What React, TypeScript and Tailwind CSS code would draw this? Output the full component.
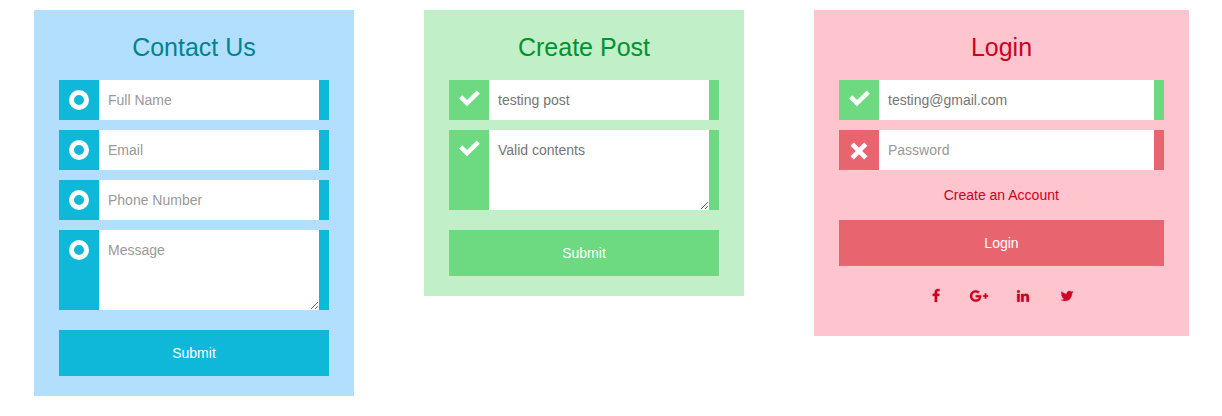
import type { ReactNode } from "react";

type Status = "idle" | "valid" | "invalid";

const box: Record<Status, string> = {
  idle: "bg-[#0fb8d8]",
  valid: "bg-[#6dd980]",
  invalid: "bg-[#e8656f]",
};

function StatusIcon({ status }: { status: Status }) {
  return (
    <svg viewBox="0 0 40 40" className="block size-10 shrink-0" fill="none" stroke="#fff">
      {status === "idle" && <circle cx="20" cy="20" r="7.5" strokeWidth="5" />}
      {status === "valid" && <path d="M11.7 16.8L18 23.1L29.3 12.2" strokeWidth="4.5" />}
      {status === "invalid" && <path d="M13.2 14.2L26.8 27.8M26.8 14.2L13.2 27.8" strokeWidth="4.6" />}
    </svg>
  );
}

interface FieldProps {
  status: Status;
  placeholder?: string;
  value?: string;
  multiline?: boolean;
}

function Field({ status, placeholder, value, multiline }: FieldProps) {
  const input =
    "block min-w-0 flex-1 rounded-none border-0 bg-white px-[9px] text-sm text-[#757575] outline-none placeholder:text-[#999]";
  return (
    <div className={`mb-2.5 flex pr-2.5 ${box[status]}`}>
      <StatusIcon status={status} />
      {multiline ? (
        <textarea className={`${input} h-20 resize py-2.5`} placeholder={placeholder} defaultValue={value} />
      ) : (
        <input className={`${input} h-10`} placeholder={placeholder} defaultValue={value} />
      )}
    </div>
  );
}

function Card({ title, className, children }: { title: string; className: string; children: ReactNode }) {
  return (
    <form className={`px-[25px] pb-5 ${className}`} onSubmit={(e) => e.preventDefault()}>
      <h2 className="pt-[22px] pb-[18px] text-center text-[25px] leading-[30px]">{title}</h2>
      {children}
    </form>
  );
}

function Button({ label, className }: { label: string; className: string }) {
  return (
    <button type="submit" className={`block h-[46px] w-full text-sm text-white ${className}`}>
      {label}
    </button>
  );
}

const social = [
  {
    name: "Facebook",
    box: "0 0 1792 1792",
    d: "M1343 12v264h-157q-86 0-116 36t-30 108v189h293l-39 296h-254v759h-306v-759h-255v-296h255v-218q0-186 104-288.5t277-102.5q147 0 228 12z",
  },
  {
    name: "Google Plus",
    box: "0 0 2304 1792",
    d: "M1437 913q0 208-87 370.5t-248 254-369 91.5q-149 0-285-58t-234-156-156-234-58-285 58-285 156-234 234-156 285-58q286 0 491 192l-199 191q-117-113-292-113-123 0-227.5 62t-165.5 168.5-61 232.5 61 232.5 165.5 168.5 227.5 62q83 0 152.5-23t114.5-57.5 78.5-78.5 49-83 21.5-74h-416v-252h692q12 63 12 122zm867-122v210h-209v209h-210v-209h-209v-210h209v-209h210v209h209z",
  },
  {
    name: "LinkedIn",
    box: "0 0 1792 1792",
    d: "M477 625v991h-330v-991h330zm21-306q1 73-50.5 122t-135.5 49h-2q-82 0-132-49t-50-122q0-74 51.5-122.5t134.5-48.5 133 48.5 51 122.5zm1166 729v568h-329v-530q0-105-40.5-164.5t-126.5-59.5q-63 0-105.5 34.5t-63.5 85.5q-11 30-11 81v553h-329q2-399 2-647t-1-296l-1-48h329v144h-2q20-32 41-56t56.5-52 87-43.5 114.5-15.5q171 0 275 113.5t104 332.5z",
  },
  {
    name: "Twitter",
    box: "0 0 1792 1792",
    d: "M1684 408q-67 98-162 167 1 14 1 42 0 130-38 259.5t-115.5 248.5-184.5 210.5-258 146-323 54.5q-271 0-496-145 35 4 78 4 225 0 401-138-105-2-188-64.5t-114-159.5q33 5 61 5 43 0 85-11-112-23-185.5-111.5t-73.5-205.5v-4q68 38 146 41-66-44-105-115t-39-154q0-88 44-163 121 149 294.5 238.5t371.5 99.5q-8-38-8-74 0-134 94.5-228.5t228.5-94.5q140 0 236 102 109-21 205-78-37 115-142 178 93-10 186-50z",
  },
];

export default function App() {
  return (
    <main className="flex min-h-[416px] items-start gap-[70px] bg-white pt-2.5 pl-[34px] font-['Liberation_Sans',Arial,sans-serif]">
      <Card title="Contact Us" className="w-80 bg-[#b3dfff] text-[#00838f]">
        <Field status="idle" placeholder="Full Name" />
        <Field status="idle" placeholder="Email" />
        <Field status="idle" placeholder="Phone Number" />
        <Field status="idle" placeholder="Message" multiline />
        <div className="pt-2.5">
          <Button label="Submit" className="bg-[#0fb8d8]" />
        </div>
      </Card>
      <Card title="Create Post" className="w-80 bg-[#c1efc8] text-[#009130]">
        <Field status="valid" value="testing post" />
        <Field status="valid" value="Valid contents" multiline />
        <div className="pt-2.5">
          <Button label="Submit" className="bg-[#6dd980]" />
        </div>
      </Card>
      <Card title="Login" className="w-[375px] bg-[#ffc5cf] text-[#cc0022]">
        <Field status="valid" value="testing@gmail.com" />
        <Field status="invalid" placeholder="Password" />
        <div className="flex h-10 items-center justify-center pr-[0.5px] pb-2.5 text-sm">
          <a href="#create">Create an Account</a>
        </div>
        <Button label="Login" className="bg-[#e8656f]" />
        <nav className="flex h-[50px] justify-center pt-[23px] pr-[0.5px]">
          {social.map((s) => (
            <a key={s.name} href="#social" className="flex w-[43.8px] justify-center">
              <svg viewBox={s.box} className="h-3.5 w-auto overflow-visible" fill="currentColor" stroke="currentColor" strokeWidth="40">
                <path d={s.d} />
              </svg>
            </a>
          ))}
        </nav>
      </Card>
    </main>
  );
}
